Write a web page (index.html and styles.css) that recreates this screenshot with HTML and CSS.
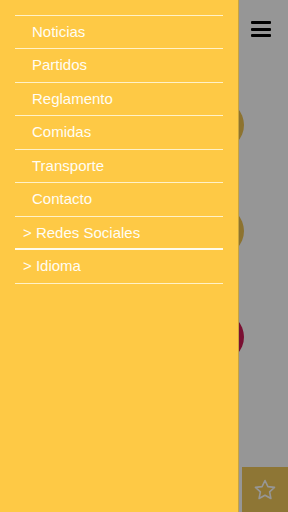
FILE: index.html
```html
<!DOCTYPE html>
<html lang="es">
<head>
    <meta charset="UTF-8">
    <meta name="viewport" content="width=device-width, initial-scale=1.0">
    <title>Menú</title>
    <link rel="stylesheet" href="styles.css">
</head>
<body>
    <div class="app">
        <!-- contenido principal (queda detrás del menú) -->
        <div class="main">
            <div class="header"></div>
            <div class="tiles">
                <div class="tile gold"></div>
                <div class="tile gold"></div>
                <div class="tile red"></div>
            </div>
            <div class="footer">
                <div class="fav">
                    <svg width="24" height="24" viewBox="0 0 24 24" fill="none" stroke="currentColor" stroke-width="1.6" stroke-linejoin="round">
                        <path d="M12 2.5l2.9 6.1 6.6.8-4.9 4.5 1.3 6.6L12 17.2l-5.9 3.3 1.3-6.6-4.9-4.5 6.6-.8z"/>
                    </svg>
                </div>
            </div>
        </div>

        <div class="overlay"></div>

        <button class="menu-btn" aria-label="menu">
            <span></span><span></span><span></span>
        </button>

        <!-- menú lateral -->
        <nav class="drawer">
            <ul class="menu">
                <li><a href="#">Noticias</a></li>
                <li><a href="#">Partidos</a></li>
                <li><a href="#">Reglamento</a></li>
                <li><a href="#">Comidas</a></li>
                <li><a href="#">Transporte</a></li>
                <li><a href="#">Contacto</a></li>
                <li class="sub strong"><a href="#">&gt; Redes Sociales</a></li>
                <li class="sub"><a href="#">&gt; Idioma</a></li>
            </ul>
        </nav>
    </div>
</body>
</html>
```

FILE: styles.css
```css
/* base */
body {
    margin: 0;
    font-family: "Liberation Sans", Arial, sans-serif;
}

.app {
    position: relative;
    width: 288px;
    height: 512px;
    overflow: hidden;
    background: #ffffff;
}

/* contenido principal */
.main {
    display: flex;
    flex-direction: column;
    height: 100%;
}
.header { height: 100px; }
.tiles {
    display: flex;
    flex-direction: column;
    align-items: flex-end;
    gap: 56px;
    padding-right: 44px;
}
.tile {
    width: 50px;
    height: 50px;
    border-radius: 50%;
}
.tile.gold { background: #f0c351; }
.tile.red { background: #cf1b55; }

.footer {
    margin-top: auto;
    display: flex;
    justify-content: flex-end;
}
.fav {
    width: 46px;
    height: 45px;
    background: #f2c95a;
    color: #ffffff;
    display: flex;
    align-items: center;
    justify-content: center;
}

/* capa oscura */
.overlay {
    position: absolute;
    inset: 0;
    background: rgba(0, 0, 0, 0.41);
}

/* botón hamburguesa */
.menu-btn {
    position: absolute;
    top: 21px;
    right: 17px;
    width: 20px;
    padding: 0;
    border: none;
    background: none;
    display: flex;
    flex-direction: column;
    gap: 3.5px;
}
.menu-btn span {
    height: 3px;
    background: #000;
    border-radius: 1px;
}

/* menú lateral */
.drawer {
    position: absolute;
    top: 0;
    left: 0;
    bottom: 0;
    width: 238px;
    background: #fec945;
    border-right: 1px solid #c9a43e;
}
.menu {
    list-style: none;
    margin: 14.5px 15px 0;
    padding: 0;
    border-top: 1px solid #fff2c8;
}
.menu li { border-bottom: 1px solid #fff2c8; }
.menu li.strong { border-bottom: 2px solid #fffbea; }
.menu a {
    display: block;
    height: 32.5px;
    line-height: 32.5px;
    padding-left: 17px;
    color: #fffdf4;
    font-size: 15px;
    text-decoration: none;
}
.menu .sub a { padding-left: 8px; }
.menu li.strong a { height: 31.5px; }
```
